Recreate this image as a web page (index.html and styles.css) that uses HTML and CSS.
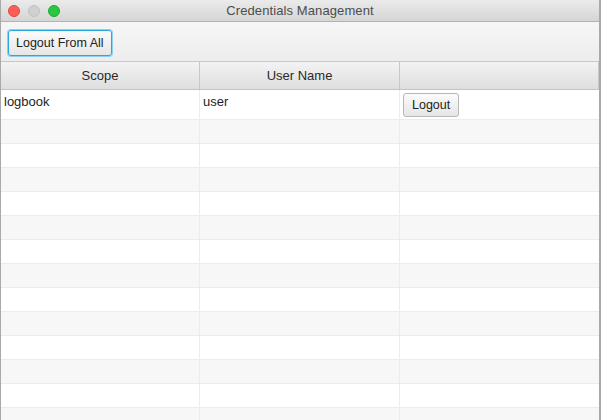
FILE: index.html
```html
<!DOCTYPE html>
<html>
<head>
<meta charset="utf-8">
<link rel="stylesheet" href="styles.css">
</head>
<body>
<div class="window">
  <div class="titlebar">
    <div class="lights">
      <span class="light red"></span>
      <span class="light gray"></span>
      <span class="light green"></span>
    </div>
    <div class="title">Credentials Management</div>
  </div>
  <div class="toolbar">
    <button class="btn focused">Logout From All</button>
  </div>
  <div class="table">
    <div class="row head">
      <div class="cell">Scope</div>
      <div class="cell">User Name</div>
      <div class="cell"></div>
    </div>
    <div class="row first">
      <div class="cell">logbook</div>
      <div class="cell">user</div>
      <div class="cell"><button class="btn small">Logout</button></div>
    </div>
    <div class="row odd"><div class="cell"></div><div class="cell"></div><div class="cell"></div></div>
    <div class="row"><div class="cell"></div><div class="cell"></div><div class="cell"></div></div>
    <div class="row odd"><div class="cell"></div><div class="cell"></div><div class="cell"></div></div>
    <div class="row"><div class="cell"></div><div class="cell"></div><div class="cell"></div></div>
    <div class="row odd"><div class="cell"></div><div class="cell"></div><div class="cell"></div></div>
    <div class="row"><div class="cell"></div><div class="cell"></div><div class="cell"></div></div>
    <div class="row odd"><div class="cell"></div><div class="cell"></div><div class="cell"></div></div>
    <div class="row"><div class="cell"></div><div class="cell"></div><div class="cell"></div></div>
    <div class="row odd"><div class="cell"></div><div class="cell"></div><div class="cell"></div></div>
    <div class="row"><div class="cell"></div><div class="cell"></div><div class="cell"></div></div>
    <div class="row odd"><div class="cell"></div><div class="cell"></div><div class="cell"></div></div>
    <div class="row"><div class="cell"></div><div class="cell"></div><div class="cell"></div></div>
    <div class="row odd"><div class="cell"></div><div class="cell"></div><div class="cell"></div></div>
  </div>
</div>
</body>
</html>
```
FILE: styles.css
```css
* { box-sizing: border-box; }
html, body { margin: 0; padding: 0; }
body {
  width: 601px;
  height: 420px;
  overflow: hidden;
  font-family: "Liberation Sans", Arial, sans-serif;
  font-size: 13px;
  color: #1e1e1e;
  background: #ffffff;
}
.window {
  width: 601px;
  height: 420px;
  border-left: 1px solid #a9a9a9;
  border-right: 2px solid #a9a9a9;
  overflow: hidden;
  display: flex;
  flex-direction: column;
}
.titlebar {
  height: 22px;
  flex: none;
  display: flex;
  align-items: center;
  position: relative;
  background: linear-gradient(#ebebeb, #d5d5d5);
  border-bottom: 1px solid #b3b3b3;
}
.lights {
  display: flex;
  gap: 8px;
  padding-left: 7px;
}
.light {
  width: 12px;
  height: 12px;
  border-radius: 50%;
}
.red { background: #fc5f57; border: 1px solid #e14640; }
.gray { background: #d0d0d0; border: 1px solid #c0c0c0; }
.green { background: #29c840; border: 1px solid #1daa2c; }
.title {
  position: absolute;
  left: 0;
  right: 0;
  text-align: center;
  color: #4d4d4d;
  font-size: 13px;
  letter-spacing: 0.1px;
}
.toolbar {
  height: 40px;
  flex: none;
  display: flex;
  align-items: center;
  padding-left: 7px;
  padding-top: 2px;
  background: linear-gradient(#f6f6f6, #ededed);
  border-bottom: 1px solid #c8c8c8;
}
.btn {
  font-family: "Liberation Sans", Arial, sans-serif;
  font-size: 12.5px;
  color: #222;
  height: 26px;
  padding: 0 7px;
  border: 1px solid #b8b8b8;
  border-radius: 3px;
  background: linear-gradient(#fbfbfb, #e6e6e6);
}
.btn.focused {
  border: 1px solid #28a8e0;
  box-shadow: 0 0 0 1px #8fd0f0;
}
.btn.small {
  height: 24px;
  padding: 0 8px;
  margin-top: 3px;
  margin-left: 3px;
}
.table {
  flex: 1;
  display: flex;
  flex-direction: column;
}
.row {
  display: grid;
  grid-template-columns: 199px 200px 1fr;
  height: 24px;
  flex: none;
  border-bottom: 1px solid #ececec;
  background: #ffffff;
}
.row.odd { background: #f7f7f7; }
.row .cell {
  border-right: 1px solid #ececec;
  padding-left: 3px;
}
.row .cell:last-child { border-right: none; }
.row.head {
  height: 28px;
  background: linear-gradient(#f3f3f3, #dedede);
  border-bottom: 1px solid #c4c4c4;
}
.row.head .cell {
  border-right: 1px solid #c8c8c8;
  text-align: center;
  line-height: 27px;
  padding-left: 0;
  color: #2a2a2a;
}
.row.first {
  height: 30px;
}
.row.first .cell {
  padding-top: 4px;
}
.row.first .cell:last-child { padding-top: 0; padding-left: 0; }
```
